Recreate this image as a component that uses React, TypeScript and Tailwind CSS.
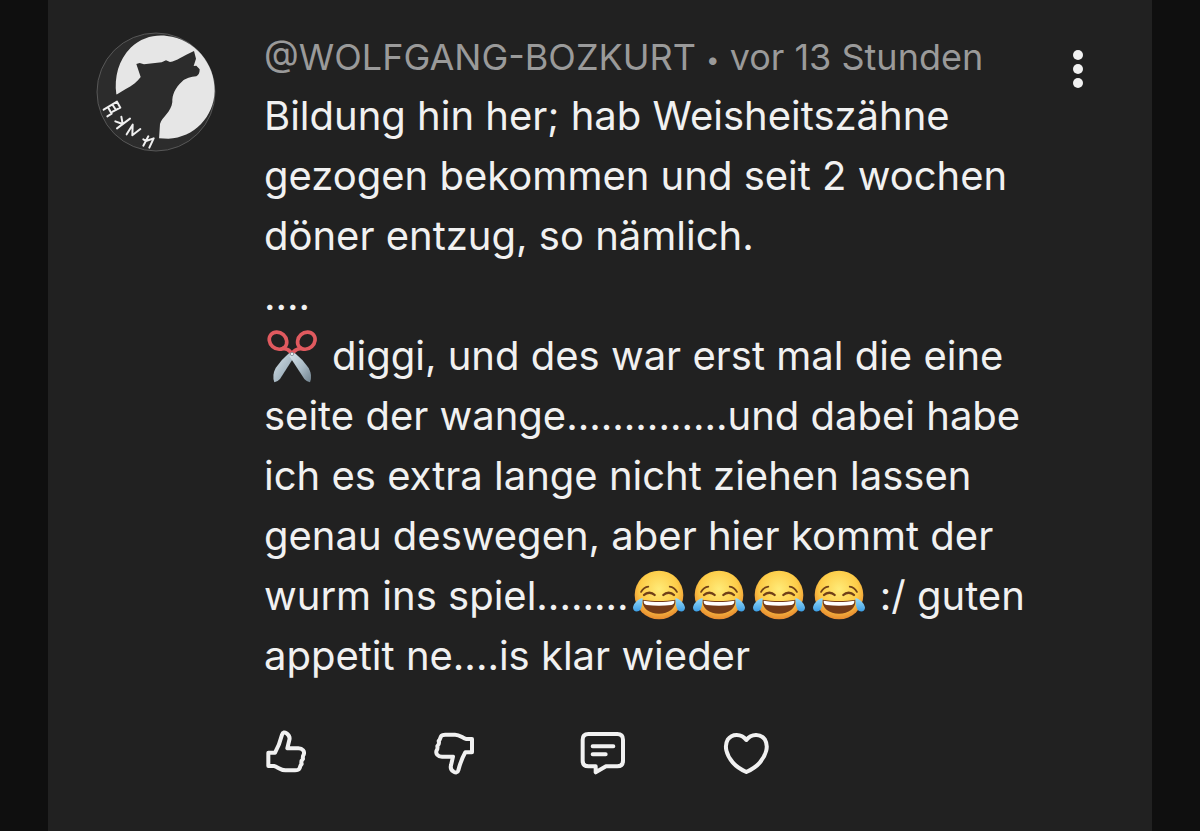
import type { ReactNode } from "react";

function Avatar() {
  return (
    <svg viewBox="30 30 360 360" className="size-30 shrink-0" role="img" aria-label="WOLFGANG-BOZKURT">
      <circle cx="210" cy="210" r="177" fill="#2c2c2c" stroke="#707070" strokeWidth="2" />
      <path
        d="M91 217C84 165 98 113 134 77C166 47 206 37 243 42C325 51 388 125 386 207C384 285 324 347 247 350L219 349Z"
        fill="#e6e6e6"
      />
      <path
        d="M86 221L118 202C139 191 155 178 164 165L151 126L161 123L174 127L227 121L240 115L252 120C273 117 289 103 324 87L330 110L323 132L331 131L341 142C341 151 339 159 331 163C315 165 299 168 289 178C267 198 258 220 259 240C256 270 229 284 222 306L219 352L150 365L80 300Z"
        fill="#2c2c2c"
      />
      <g fill="none" stroke="#f0f0f0" strokeWidth="6" strokeLinecap="round" strokeLinejoin="round">
        <path d="M53 263L93 239L103 257L80 269M66 256L77 275L64 283M80 249L90 264" />
        <path d="M93 319L132 290M106 284L110 306M88 298L110 306" />
        <path d="M122 337L140 308L139 340L163 321" />
        <path d="M187 343L172 371M180 357L203 349L190 377M172 352L180 357" />
      </g>
    </svg>
  );
}

function Scissors() {
  return (
    <svg viewBox="27 22 180 168" className="mr-2 inline-block h-14 w-15 align-[-14px]" role="img" aria-label="✂️">
      <defs>
        <linearGradient id="blade" x1="0" y1="0" x2="1" y2="1">
          <stop offset="0" stopColor="#d9e5ec" />
          <stop offset="0.55" stopColor="#a9bac5" />
          <stop offset="1" stopColor="#71838f" />
        </linearGradient>
      </defs>
      <path d="M105 95L119 106L75 175Q68 183 58 185Q50 165 62 142Q80 116 105 95Z" fill="url(#blade)" />
      <path d="M117 95L103 106L148 175Q155 183 165 185Q173 165 161 142Q143 116 117 95Z" fill="url(#blade)" />
      <g fill="none" stroke="#e05a5f" strokeWidth="11" strokeLinecap="round">
        <ellipse cx="69" cy="60" rx="28" ry="24" transform="rotate(42 69 60)" />
        <ellipse cx="154" cy="60" rx="28" ry="24" transform="rotate(-42 154 60)" />
        <path d="M84 83Q98 84 106 93" />
        <path d="M139 83Q125 84 116 93" />
      </g>
      <circle cx="111" cy="100" r="5" fill="#e9eef1" stroke="#71808a" strokeWidth="2" />
    </svg>
  );
}

function JoyFace() {
  return (
    <svg viewBox="10 29 180 150" className="inline-block h-[50px] w-15 align-[-10px]" role="img" aria-label="😂">
      <defs>
        <radialGradient id="face" cx="0.5" cy="0.38" r="0.65">
          <stop offset="0" stopColor="#ffeb78" />
          <stop offset="0.6" stopColor="#fdcc48" />
          <stop offset="1" stopColor="#e5812c" />
        </radialGradient>
        <linearGradient id="tear" x1="0" y1="0" x2="0" y2="1">
          <stop offset="0" stopColor="#9bdcf8" />
          <stop offset="1" stopColor="#3b9ee5" />
        </linearGradient>
      </defs>
      <circle cx="100" cy="104" r="73" fill="url(#face)" />
      <g fill="none" stroke="#704018" strokeWidth="5" strokeLinecap="round">
        <path d="M46 95C51 86 58 80 68 79" />
        <path d="M132 79C142 80 149 86 154 95" />
        <path d="M55 104C64 95 78 95 87 104" strokeWidth="7" />
        <path d="M113 104C122 95 136 95 145 104" strokeWidth="7" />
      </g>
      <path d="M50 118C80 123 120 123 150 118C151 144 129 160 100 160C71 160 49 144 50 118Z" fill="#743b18" />
      <path d="M54 121C82 126 118 126 146 121C147 128 143 133 137 134C113 137 87 137 63 134C57 133 53 128 54 121Z" fill="#fff" />
      <path d="M51 113C37 117 25 127 22 141C21 155 38 158 45 147C50 138 50 125 51 113Z" fill="url(#tear)" />
      <path d="M149 113C163 117 175 127 178 141C179 155 162 158 155 147C150 138 150 125 149 113Z" fill="url(#tear)" />
    </svg>
  );
}

type ActionProps = {
  label: string;
  viewBox: string;
  className?: string;
  children: ReactNode;
};

function Action({ label, viewBox, className, children }: ActionProps) {
  return (
    <button type="button" aria-label={label} className={className}>
      <svg
        viewBox={viewBox}
        className="size-11 overflow-visible"
        fill="none"
        stroke="currentColor"
        strokeWidth="12"
        strokeLinecap="round"
        strokeLinejoin="round"
        aria-hidden="true"
      >
        {children}
      </svg>
    </button>
  );
}

const lines: ReactNode[] = [
  "Bildung hin her; hab Weisheitszähne",
  "gezogen bekommen und seit 2 wochen",
  "döner entzug, so nämlich.",
  "....",
  <>
    <Scissors />
    diggi, und des war erst mal die eine
  </>,
  "seite der wange..............und dabei habe",
  "ich es extra lange nicht ziehen lassen",
  "genau deswegen, aber hier kommt der",
  <>
    wurm ins spiel........
    <JoyFace />
    <JoyFace />
    <JoyFace />
    <JoyFace /> :/ guten
  </>,
  "appetit ne....is klar wieder"
];

export default function App() {
  return (
    <main className="flex min-h-screen bg-[#0f0f0f] px-12 font-['Inter',sans-serif] text-[#f1f1f1]">
      <article className="flex flex-1 items-start bg-[#212121] px-12 pt-8 pb-12">
        <Avatar />
        <div className="-mt-1 ml-12 min-w-0 flex-1">
          <header className="text-4xl/[58px] whitespace-nowrap text-[#9a9a9a]">
            <a href="#profile">@WOLFGANG-BOZKURT</a> <span className="align-middle text-2xl/6">•</span>{" "}
            <time>vor 13 Stunden</time>
          </header>
          <div className="text-[40px]/[60px] whitespace-nowrap">
            {lines.map((line, index) => (
              <p key={index} className="h-15">
                {line}
              </p>
            ))}
          </div>
          <div className="mt-11 flex items-center">
            <Action label="Mag ich" viewBox="42 30 132 132" className="mr-31">
              <path d="M55 98H75C83 84 91 64 96 44C98 36 104 36 110 40C118 46 120 53 118 60L112 85H145C158 85 165 94 161 104C158 108 158 112 159 117C153 122 153 126 155 132C150 137 151 140 148 146C146 150 141 151 135 151H106C91 151 83 140 72 138H55Z" />
            </Action>
            <Action label="Mag ich nicht" viewBox="546 30 132 132" className="mr-[105px]">
              <path d="M666 97H646C638 111 630 131 625 151C623 159 617 158 611 155C603 150 601 143 603 136L609 110H576C563 110 556 101 560 91C563 87 563 83 562 78C568 73 568 69 566 63C571 58 570 55 573 49C575 45 580 44 586 44H615C630 44 638 55 649 57H666Z" />
            </Action>
            <Action label="Antworten" viewBox="33 30 132 132" className="mr-[99px]">
              <path d="M55 42H142Q159 42 159 59V122Q159 139 142 139H108L77 157V139H55Q38 139 38 122V59Q38 42 55 42Z" />
              <path d="M68 79H130M68 103H107" />
            </Action>
            <Action label="Herz" viewBox="462 30 132 132">
              <path d="M529 60C514 40 486 40 473 59C462 78 469 105 488 127C499 140 514 149 529 156C544 149 559 140 570 127C589 105 596 78 585 59C572 40 544 40 529 60Z" />
            </Action>
          </div>
        </div>
        <button type="button" aria-label="Weitere Optionen" className="mt-4 mr-4">
          <svg viewBox="0 0 20 42" className="h-[42px] w-5" fill="currentColor" aria-hidden="true">
            <circle cx="10" cy="7" r="5" />
            <circle cx="10" cy="21" r="5" />
            <circle cx="10" cy="35" r="5" />
          </svg>
        </button>
      </article>
    </main>
  );
}
